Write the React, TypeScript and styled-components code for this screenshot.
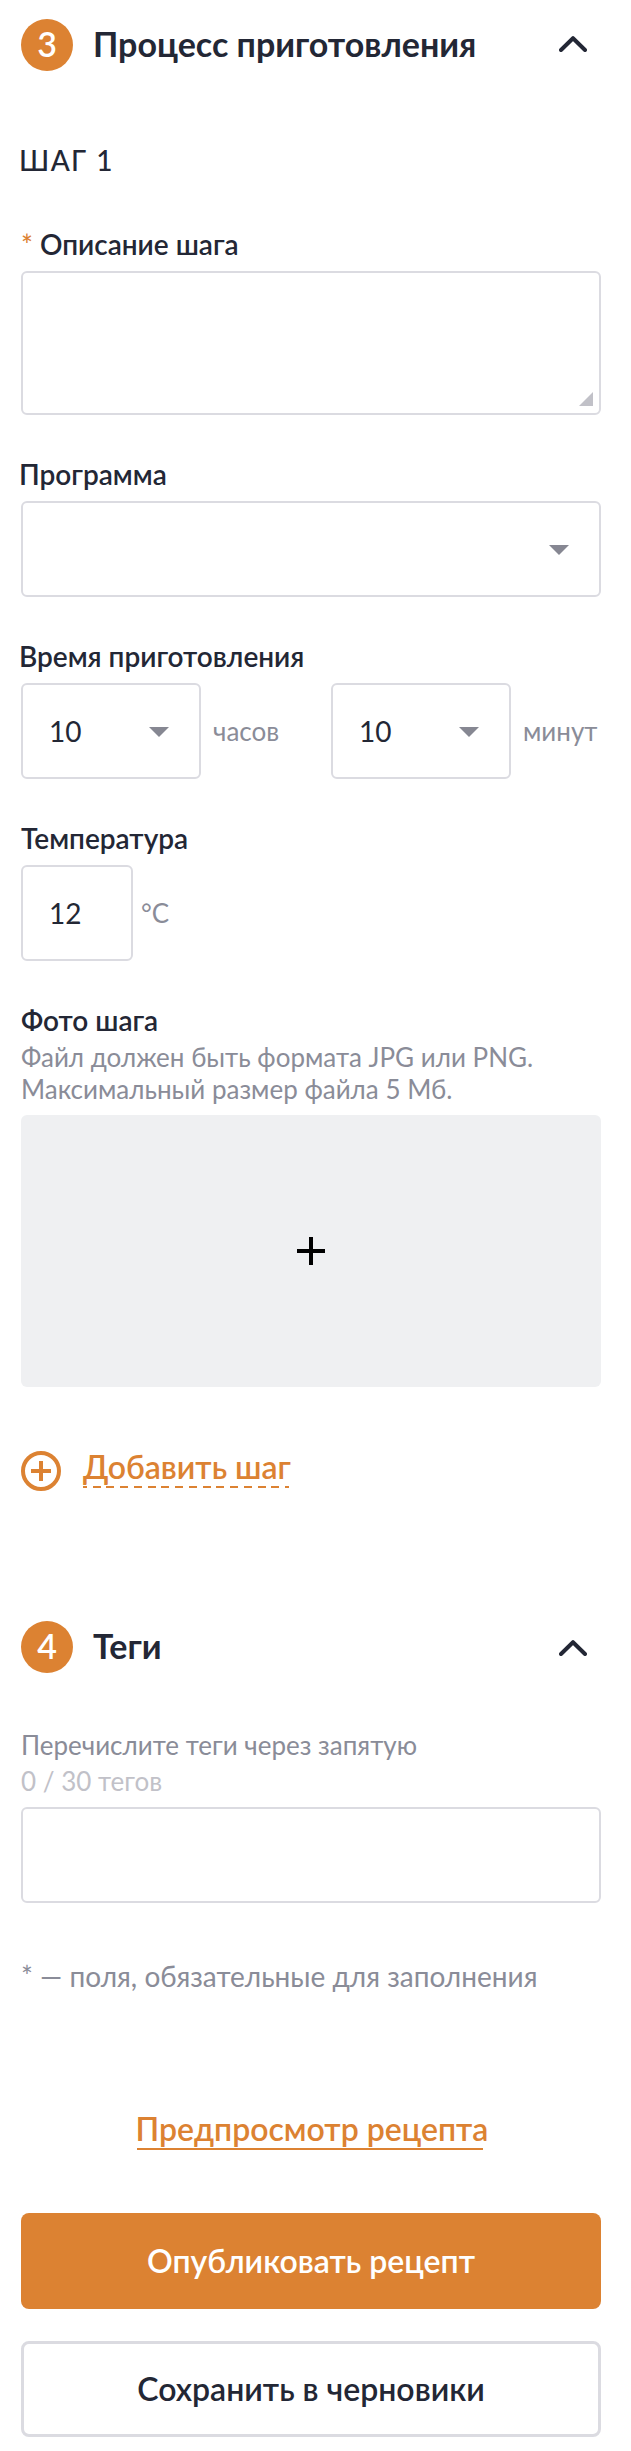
import React from 'react';
import styled, { createGlobalStyle } from 'styled-components';

const color = {
  accent: '#dc8232',
  text: '#232735',
  muted: '#8a8c98',
  faint: '#c1c1c8',
  arrow: '#868792',
  border: '#dbdbe1',
  fill: '#eff0f2',
};

const GlobalStyle = createGlobalStyle`
  *, *::before, *::after { box-sizing: border-box; }
  body {
    margin: 0;
    background: #fff;
    color: ${color.text};
    font-family: Lato, "Open Sans", sans-serif;
  }
`;

const Page = styled.main`
  display: flex;
  flex-direction: column;
  width: 631px;
  padding: 19px 30px 14px 21px;
`;

const Header = styled.header<{ $gap: number }>`
  display: flex;
  align-items: center;
  height: 52px;
  margin-bottom: ${(p) => p.$gap}px;
`;

const Number = styled.span`
  flex: none;
  display: flex;
  align-items: center;
  justify-content: center;
  width: 52px;
  height: 52px;
  padding-bottom: 2px;
  border-radius: 50%;
  background: ${color.accent};
  color: #fff;
  font-size: 34px;
  font-weight: 600;
  line-height: 50px;
`;

const Title = styled.h2`
  flex: 1;
  margin: 0 0 0 20px;
  padding-bottom: 2px;
  font-size: 34px;
  font-weight: 700;
  line-height: 50px;
  white-space: nowrap;
`;

const Chevron = styled.svg<{ $drop?: number }>`
  flex: none;
  width: 28px;
  height: 16px;
  margin: ${(p) => p.$drop ?? 0}px 14px 0 0;
`;

const StepTitle = styled.h3`
  margin: 0 0 50px -2px;
  font-size: 28px;
  font-weight: 500;
  line-height: 34px;
  letter-spacing: 1.45px;
`;

const Field = styled.section`
  display: flex;
  flex-direction: column;
  margin-bottom: 42px;
`;

const Label = styled.label<{ $outdent?: boolean }>`
  height: 34px;
  margin: 0 0 10px ${(p) => (p.$outdent ? -2 : 0)}px;
  font-size: 28px;
  font-weight: 600;
  line-height: 34px;
  white-space: nowrap;
`;

const Required = styled.span`
  color: ${color.accent};
  font-weight: 500;
`;

const Control = styled.div<{ $width?: number; $height?: number }>`
  flex: none;
  display: flex;
  align-items: center;
  justify-content: space-between;
  width: ${(p) => (p.$width ? `${p.$width}px` : '100%')};
  height: ${(p) => p.$height ?? 96}px;
  padding: 0 30px 0 26px;
  border: 2px solid ${color.border};
  border-radius: 6px;
  font-size: 28px;
  line-height: 34px;
`;

const TextArea = styled(Control)`
  align-items: flex-end;
  justify-content: flex-end;
  padding: 0 6px 7px;
`;

const Arrow = styled.svg`
  width: 20px;
  height: 10px;
  margin: 2px 0 0 auto;
`;

const Grip = styled.svg`
  width: 14px;
  height: 14px;
`;

const Row = styled.div`
  display: flex;
  align-items: center;
`;

const Cell = styled(Row)<{ $gap: number; $width?: number }>`
  gap: ${(p) => p.$gap}px;
  width: ${(p) => (p.$width ? `${p.$width}px` : 'auto')};
`;

const Unit = styled.span`
  color: ${color.muted};
  font-size: 26px;
  line-height: 32px;
  white-space: nowrap;
`;

const Hint = styled.p<{ $faint?: boolean; $line: number }>`
  margin: 0;
  color: ${(p) => (p.$faint ? color.faint : color.muted)};
  font-size: 26px;
  line-height: ${(p) => p.$line}px;
  white-space: nowrap;
`;

const FileHints = styled.div`
  margin: -6px 0 10px;
`;

const TagHints = styled.div`
  margin-bottom: 8px;
`;

const Upload = styled.div`
  display: flex;
  align-items: center;
  justify-content: center;
  height: 272px;
  border-radius: 6px;
  background: ${color.fill};
`;

const AddRow = styled.div`
  display: flex;
  align-items: flex-start;
  gap: 22px;
  margin: 19px 0 130px;
`;

const AddIcon = styled.svg`
  width: 40px;
  height: 40px;
  margin-top: 3px;
`;

const AddLink = styled.a`
  height: 40px;
  color: ${color.accent};
  font-size: 32px;
  font-weight: 600;
  line-height: 38px;
  white-space: nowrap;
  &::after {
    content: '';
    display: block;
    width: 206px;
    height: 2px;
    background: repeating-linear-gradient(
      90deg,
      ${color.accent} 0 4px,
      transparent 4px 9.73px,
      ${color.accent} 9.73px 13.733px
    );
  }
`;

const Footnote = styled.p`
  margin: 56px 0 117px;
  color: ${color.muted};
  font-size: 28px;
  line-height: 34px;
  white-space: nowrap;
`;

const PreviewLink = styled.a`
  align-self: center;
  margin: 0 0 63px 2px;
  color: ${color.accent};
  font-size: 32px;
  font-weight: 600;
  line-height: 38px;
  white-space: nowrap;
  &::after {
    content: '';
    display: block;
    width: 346px;
    height: 2px;
    margin-left: 1px;
    background: ${color.accent};
  }
`;

const Button = styled.button<{ $outlined?: boolean }>`
  height: 96px;
  padding: 0;
  border: ${(p) => (p.$outlined ? `3px solid ${color.border}` : '0')};
  border-radius: 8px;
  background: ${(p) => (p.$outlined ? '#fff' : color.accent)};
  color: ${(p) => (p.$outlined ? color.text : '#fff')};
  font: 600 32px/38px Lato, sans-serif;
  & + & {
    margin-top: 32px;
  }
`;

function Collapse({ drop }: { drop?: number }) {
  return (
    <Chevron viewBox="0 0 28 16" $drop={drop}>
      <path d="M2 14 14 2.2 26 14" fill="none" stroke={color.text} strokeWidth="4" strokeLinecap="round" strokeLinejoin="round" />
    </Chevron>
  );
}

function DropArrow() {
  return (
    <Arrow viewBox="0 0 20 10">
      <path d="M0 0h20L10 10z" fill={color.arrow} />
    </Arrow>
  );
}

export default function App() {
  return (
    <>
      <GlobalStyle />
      <Page>
        <Header $gap={72}>
          <Number>3</Number>
          <Title>Процесс приготовления</Title>
          <Collapse drop={-3} />
        </Header>

        <StepTitle>ШАГ 1</StepTitle>

        <Field>
          <Label>
            <Required>*</Required> Описание шага
          </Label>
          <TextArea $height={144}>
            <Grip viewBox="0 0 14 14">
              <path d="M14 0v14H0z" fill={color.faint} />
            </Grip>
          </TextArea>
        </Field>

        <Field>
          <Label $outdent>Программа</Label>
          <Control>
            <DropArrow />
          </Control>
        </Field>

        <Field>
          <Label $outdent>Время приготовления</Label>
          <Row>
            <Cell $gap={12} $width={310}>
              <Control $width={180}>
                10
                <DropArrow />
              </Control>
              <Unit>часов</Unit>
            </Cell>
            <Cell $gap={12}>
              <Control $width={180}>
                10
                <DropArrow />
              </Control>
              <Unit>минут</Unit>
            </Cell>
          </Row>
        </Field>

        <Field>
          <Label>Температура</Label>
          <Cell $gap={8}>
            <Control $width={112}>12</Control>
            <Unit>°C</Unit>
          </Cell>
        </Field>

        <Field>
          <Label>Фото шага</Label>
          <FileHints>
            <Hint $line={32}>Файл должен быть формата JPG или PNG.</Hint>
            <Hint $line={32}>Максимальный размер файла 5 Мб.</Hint>
          </FileHints>
          <Upload>
            <svg width="28" height="28" viewBox="0 0 28 28">
              <path d="M14 0v28M0 14h28" stroke="#000" strokeWidth="4" />
            </svg>
          </Upload>
        </Field>

        <AddRow>
          <AddIcon viewBox="0 0 40 40">
            <circle cx="20" cy="20" r="18" fill="none" stroke={color.accent} strokeWidth="4" />
            <path d="M20 10v20M10 20h20" stroke={color.accent} strokeWidth="4" />
          </AddIcon>
          <AddLink>Добавить шаг</AddLink>
        </AddRow>

        <Header $gap={54}>
          <Number>4</Number>
          <Title>Теги</Title>
          <Collapse drop={1} />
        </Header>

        <TagHints>
          <Hint $line={36}>Перечислите теги через запятую</Hint>
          <Hint $line={36} $faint>0 / 30 тегов</Hint>
        </TagHints>
        <Control />

        <Footnote>* — поля, обязательные для заполнения</Footnote>

        <PreviewLink>Предпросмотр рецепта</PreviewLink>
        <Button>Опубликовать рецепт</Button>
        <Button $outlined>Сохранить в черновики</Button>
      </Page>
    </>
  );
}
